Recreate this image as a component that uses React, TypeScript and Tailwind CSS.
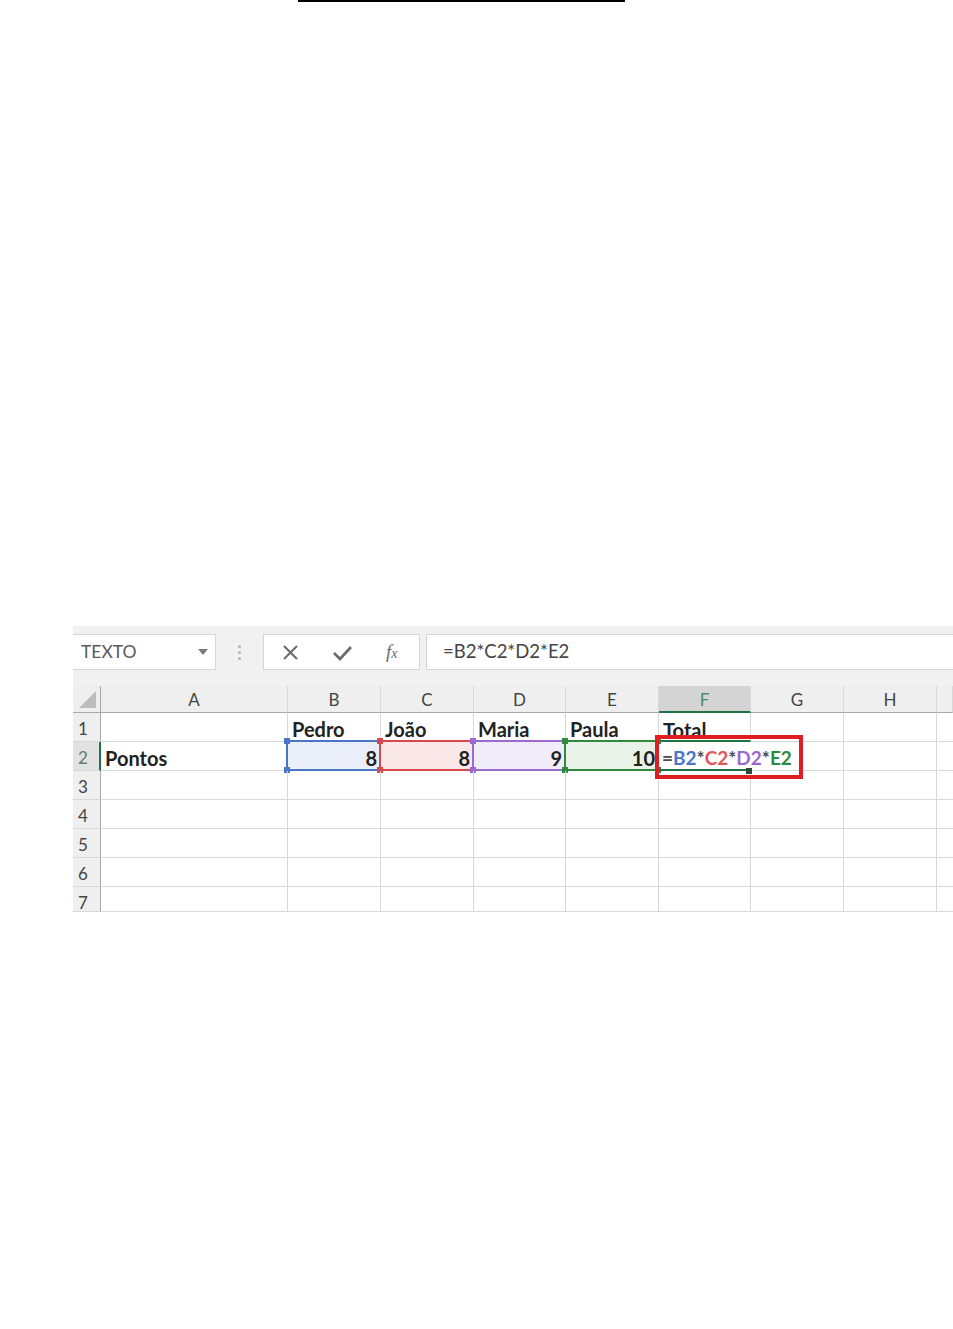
import React from 'react';

const COLS = ['A', 'B', 'C', 'D', 'E', 'F', 'G', 'H', ''];
const ROWS = [1, 2, 3, 4, 5, 6, 7];

const FONT = { fontFamily: 'Lato, "Noto Sans", sans-serif' };

// selection colours for the referenced cells
const REFS: Record<string, { border: string; fill: string; square: string }> = {
  B: { border: 'border-[#4a76c9]', fill: 'bg-[#e9eef8]', square: 'bg-[#4a76c9]' },
  C: { border: 'border-[#d9484d]', fill: 'bg-[#fae8e8]', square: 'bg-[#d9484d]' },
  D: { border: 'border-[#9a6ad0]', fill: 'bg-[#f1ecf9]', square: 'bg-[#9a6ad0]' },
  E: { border: 'border-[#2f8a3e]', fill: 'bg-[#e8f2e8]', square: 'bg-[#2f8a3e]' },
};

const VALUES: Record<string, string> = { B: '8', C: '8', D: '9', E: '10' };
const NAMES: Record<string, string> = { B: 'Pedro', C: 'João', D: 'Maria', E: 'Paula', F: 'Total' };

function RefSelection({ col }: { col: string }) {
  const c = REFS[col];
  return (
    <div className={`absolute -left-[2px] -top-[2px] -right-[1px] -bottom-[1px] border-2 ${c.border} pointer-events-none`}>
      <span className={`absolute -left-[4px] -top-[4px] w-[6px] h-[6px] ${c.square}`} />
      <span className={`absolute -right-[4px] -top-[4px] w-[6px] h-[6px] ${c.square}`} />
      <span className={`absolute -left-[4px] -bottom-[4px] w-[6px] h-[6px] ${c.square}`} />
      <span className={`absolute -right-[4px] -bottom-[4px] w-[6px] h-[6px] ${c.square}`} />
    </div>
  );
}

function Toolbar() {
  return (
    <div className="h-[60px] bg-[#f1f1f1] pt-[8px] flex items-start">
      {/* name box */}
      <div className="w-[143px] h-[36px] bg-white border border-[#d6d6d6] border-l-0 flex items-center justify-between pl-[8px] pr-[7px]">
        <span className="text-[17.5px] text-[#5a5a5a]" style={FONT}>TEXTO</span>
        <svg width="10" height="6" viewBox="0 0 10 6"><polygon points="0,0 10,0 5,6" fill="#7a7a7a" /></svg>
      </div>
      {/* separator dots */}
      <div className="w-[47px] h-[36px] flex flex-col items-center justify-center gap-[3px]">
        <span className="w-[3px] h-[3px] rounded-full bg-[#b5b5b5]" />
        <span className="w-[3px] h-[3px] rounded-full bg-[#b5b5b5]" />
        <span className="w-[3px] h-[3px] rounded-full bg-[#b5b5b5]" />
      </div>
      {/* cancel / enter / fx */}
      <div className="w-[157px] h-[36px] bg-white border border-[#d6d6d6] flex items-center pl-[18px] gap-[33px]">
        <svg width="17" height="17" viewBox="0 0 17 17">
          <path d="M2 2 L15 15 M15 2 L2 15" stroke="#6a6a6a" strokeWidth="2" />
        </svg>
        <svg width="21" height="17" viewBox="0 0 21 17">
          <path d="M2 9 L8 15 L19 3" stroke="#6a6a6a" strokeWidth="2.6" fill="none" />
        </svg>
        <span className="text-[19px] italic text-[#6a6a6a]" style={{ fontFamily: '"Liberation Serif", serif' }}>
          f<span className="text-[14px]">x</span>
        </span>
      </div>
      <div className="w-[6px]" />
      {/* formula bar */}
      <div className="flex-1 h-[36px] bg-white border border-[#d6d6d6] border-r-0 flex items-center pl-[16px]">
        <span className="text-[18.5px] text-[#454545]" style={FONT}>=B2*C2*D2*E2</span>
      </div>
    </div>
  );
}

function HeaderRow() {
  return (
    <>
      <div className="h-[27px] bg-[#efefef] border-b border-r border-[#a9a9a9] flex items-end justify-end pr-[4px] pb-[4px]">
        <svg width="17" height="17" viewBox="0 0 17 17"><polygon points="17,0 17,17 0,17" fill="#bdbdbd" /></svg>
      </div>
      {COLS.map((c, i) => (
        <div
          key={i}
          className={`h-[27px] border-r border-[#d8d8d8] flex items-center justify-center pt-[2px] text-[17px] ${
            c === 'F'
              ? 'bg-[#d4d4d4] text-[#4f8a63] border-b-2 border-b-[#217346]'
              : 'bg-[#efefef] text-[#444444] border-b border-b-[#a9a9a9]'
          }`}
          style={FONT}
        >
          {c}
        </div>
      ))}
    </>
  );
}

function DataRow({ row }: { row: number }) {
  const last = row === 7;
  const h = last ? 'h-[25px]' : 'h-[29px]';
  return (
    <>
      <div
        className={`${h} border-b border-[#d8d8d8] flex items-center pl-[5px] text-[17px] ${last ? 'pt-[8px]' : 'pt-[4px]'} ${
          row === 2 ? 'bg-[#e2e2e2] text-[#5f7d68] border-r-2 border-r-[#217346]' : 'bg-[#efefef] text-[#444444] border-r border-r-[#a9a9a9]'
        }`}
        style={FONT}
      >
        {row}
      </div>
      {COLS.map((c, i) => {
        const isRef = row === 2 && REFS[c];
        const base = `${h} border-b border-[#d8d8d8] relative font-bold text-[#222222] flex items-center`;
        if (row === 1 && NAMES[c]) {
          return (
            <div
              key={i}
              className={`${base} text-[20px] border-r pl-[4px] ${c === 'F' ? 'pt-[6px] border-b-2 border-b-[#217346]' : 'pt-[4px]'}`}
              style={FONT}
            >
              {NAMES[c]}
            </div>
          );
        }
        if (row === 2 && c === 'A') {
          return (
            <div key={i} className={`${base} text-[20px] border-r pl-[4px] pt-[4px]`} style={FONT}>
              Pontos
            </div>
          );
        }
        if (isRef) {
          return (
            <div key={i} className={`${base} text-[20px] border-r justify-end pr-[3px] pt-[4px] ${REFS[c].fill}`} style={FONT}>
              {VALUES[c]}
              <RefSelection col={c} />
            </div>
          );
        }
        if (row === 2 && c === 'F') {
          return (
            <div key={i} className={`${base} text-[19px] z-10 pl-[3px] pt-[4px] whitespace-nowrap`} style={FONT}>
              <span className="text-[#4a4a4a]">=</span>
              <span className="text-[#4a76c9]">B2</span>
              <span className="text-[#4a4a4a]">*</span>
              <span className="text-[#e0575b]">C2</span>
              <span className="text-[#4a4a4a]">*</span>
              <span className="text-[#9a6ad0]">D2</span>
              <span className="text-[#4a4a4a]">*</span>
              <span className="text-[#2f8a3e]">E2</span>
              {/* active cell border */}
              <div className="absolute left-0 right-[4px] -bottom-[1px] h-[2px] bg-[#217346]" />
              <span className="absolute -right-[1px] -bottom-[4px] w-[6px] h-[6px] bg-[#2e4a38]" />
              {/* red annotation box */}
              <div className="absolute -left-[4px] -top-[7px] w-[148px] h-[44px] border-[4px] border-[#e01e22]" />
            </div>
          );
        }
        return <div key={i} className={`${base} ${i === COLS.length - 1 ? '' : 'border-r'}`} />;
      })}
    </>
  );
}

export default function App() {
  return (
    <div className="min-h-[1329px] w-[953px] bg-white overflow-hidden">
      <div className="ml-[298px] w-[327px] h-[2px] bg-black" />
      <div className="h-[624px]" />
      <div className="ml-[73px] w-[880px] h-[286px] overflow-hidden">
        <Toolbar />
        <div className="grid grid-cols-[28px_187px_93px_93px_92px_93px_92px_93px_93px_16px] bg-white">
          <HeaderRow />
          {ROWS.map(r => (
            <DataRow key={r} row={r} />
          ))}
        </div>
      </div>
    </div>
  );
}
